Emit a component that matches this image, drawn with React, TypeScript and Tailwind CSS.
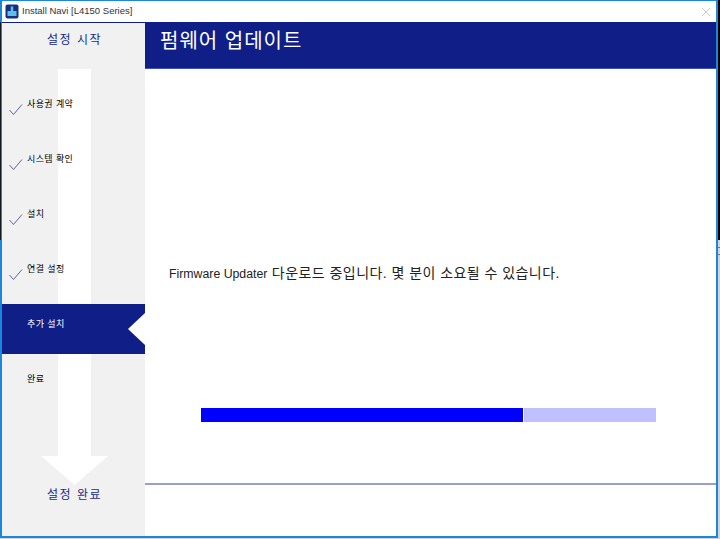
const steps = [
  { label: "사용권 계약", done: true },
  { label: "시스템 확인", done: true },
  { label: "설치", done: true },
  { label: "연결 설정", done: true },
  { label: "추가 설치", active: true },
  { label: "완료" },
];

export default function App() {
  return (
    <div className="relative w-[720px] h-[539px] overflow-hidden bg-[#d4d4d4] font-['Liberation_Sans','Noto_Sans_CJK_KR',sans-serif]">
      <div className="relative w-[718px] h-[538px] flex flex-col border-2 border-t border-[#1a86dc] bg-white">
        {/* Title bar */}
        <div className="h-[21px] flex items-center shrink-0 bg-white">
          <svg className="ml-[3px] w-[14px] h-[15px]" viewBox="0 0 14 15">
            <rect x="0.5" y="0.5" width="13" height="14" rx="2" fill="#16307f" />
            <rect x="2.500" y="7" width="9" height="5" fill="#5cc0ec" />
            <path d="M7 2.500v5" stroke="#5cc0ec" strokeWidth="2.500" fill="none" />
          </svg>
          <span className="ml-[3px] text-[9.5px] text-[#333333] whitespace-nowrap">Install Navi [L4150 Series]</span>
          <svg className="ml-auto mr-[5px] w-[10px] h-[10px]" viewBox="0 0 10 10">
            <path d="M1 1l8 8M9 1l-8 8" stroke="#cccccc" strokeWidth="1" />
          </svg>
        </div>

        <div className="flex flex-1 min-h-0">
          {/* Sidebar */}
          <div className="relative w-[143px] shrink-0 bg-[#f1f1f1] border-t border-[#0f1f87] flex flex-col">
            <div className="h-[46px] shrink-0 pb-[12px] pl-[2px] flex items-center justify-center text-[12px] tracking-[1.5px] text-[#1a2a8c]">
              설정 시작
            </div>
            {/* big arrow behind the steps */}
            <div className="absolute left-[56px] top-[46px] w-[33px] h-[387px] bg-white" />
            <svg className="absolute left-[39px] top-[433px] w-[67px] h-[29px]" viewBox="0 0 67 29">
              <path d="M0 0H67L33.500 29Z" fill="#ffffff" />
            </svg>

            <div className="relative flex flex-col pt-[15px]">
              {steps.map((s) => (
                <div key={s.label} className="relative h-[55px] shrink-0">
                  <div className={`relative h-[50px] pt-[15px] ${s.active ? "bg-[#0f1f87] text-white" : "text-black"}`}>
                    {s.done && (
                      <svg className="absolute left-[7px] top-[20px] w-[14px] h-[11px]" viewBox="0 0 14 11" fill="none">
                        <path d="M0.500 6L4.500 10.500L13 0.500" stroke="#5a64a8" strokeWidth="1" />
                      </svg>
                    )}
                    <div className="ml-[25px] text-[9px] leading-[10px] tracking-[0.4px]">{s.label}</div>
                    {s.active && (
                      <svg className="absolute right-0 top-[9px] w-[17px] h-[32px]" viewBox="0 0 17 32">
                        <path d="M17 0V32L0 16Z" fill="#ffffff" />
                      </svg>
                    )}
                  </div>
                </div>
              ))}
            </div>

            <div className="absolute left-0 right-0 top-[463px] pl-[2px] text-center text-[12px] tracking-[1.5px] text-[#1a2a8c]">
              설정 완료
            </div>
          </div>

          {/* Main */}
          <div className="flex-1 flex flex-col min-w-0">
            <div className="h-[47px] shrink-0 bg-[#0f1f87] border-b border-[#3f55b5] pb-[9px] flex items-center pl-[15px] text-[20px] tracking-[1px] text-white">
              펌웨어 업데이트
            </div>
            <div className="flex-1 flex flex-col">
              <p className="mt-[195px] ml-[24px] leading-[18px] text-[#222222] whitespace-nowrap">
                <span className="text-[12.3px]">Firmware Updater </span>
                <span className="ml-[1px] text-[14px] tracking-[0.45px]">다운로드 중입니다. 몇 분이 소요될 수 있습니다.</span>
              </p>
              <div className="mt-[125px] ml-[56px] w-[455px] h-[14px] bg-[#c0c0ff]">
                <div className="h-full w-[323px] bg-[#0000ff] border-r border-white" />
              </div>
              <div className="mt-[61px] h-[2px] bg-[#9a9fd0]" />
            </div>
          </div>
        </div>
      </div>

      {/* bits of the desktop behind the window */}
      <div className="absolute left-0 top-[22px] w-[1px] h-[218px] bg-[#101820]" />
      <div className="absolute right-0 top-0 w-[2px] h-[240px] bg-black" />
      <div className="absolute right-0 top-[247px] w-[2px] h-[1px] bg-[#777777]" />
      <div className="absolute right-0 top-[254px] w-[2px] h-[1px] bg-[#777777]" />
    </div>
  );
}
